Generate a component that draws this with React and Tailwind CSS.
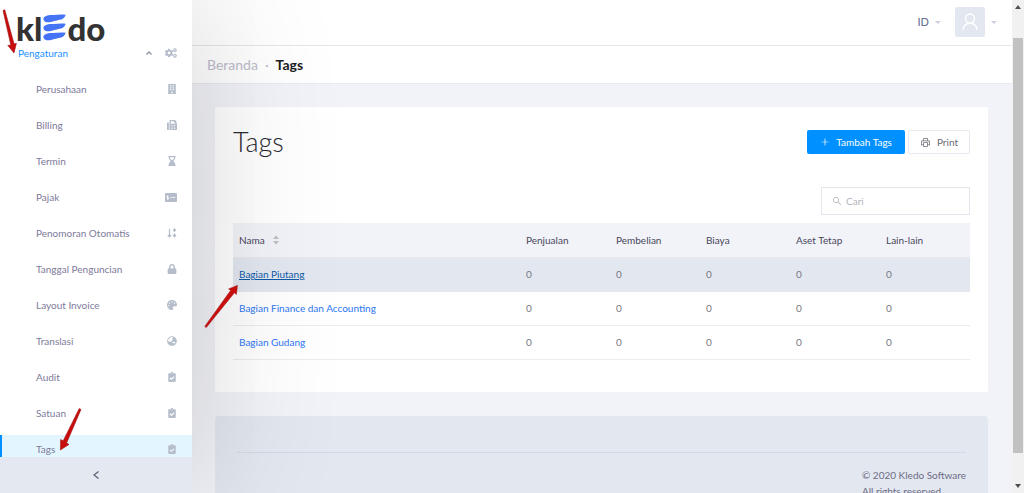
import React from "react";
import {
  FaCogs,
  FaBuilding,
  FaFax,
  FaHourglassEnd,
  FaLock,
  FaPalette,
  FaGlobeAsia,
  FaClipboardCheck,
} from "react-icons/fa";
import { AiOutlinePlus, AiOutlinePrinter, AiOutlineSearch } from "react-icons/ai";

const SortArrows = () => (
  <svg width="10" height="10" viewBox="0 0 12 12" fill="none" stroke="currentColor" strokeWidth="1.5">
    <path d="M3 1V10.4M1 8.4L3 10.6L5 8.4" />
    <path d="M9 1V4.8M9 6.2V10.4M7.2 3.2L9 1.2L10.8 3.2M7.2 8.4L9 10.6L10.800 8.4" />
  </svg>
);

const MoneyCard = () => (
  <svg width="12" height="9" viewBox="0 0 12 9">
    <rect width="12" height="9" rx="0.8" fill="currentColor" />
    <path d="M3.400 3.200H2V4.600H3.400V6H2M2.700 2.400V6.800M5 4.500H6.600M7.400 4.500H10.300" fill="none" stroke="#ffffff" strokeWidth="0.800" />
  </svg>
);

const menuItems = [
  { label: "Perusahaan", icon: FaBuilding },
  { label: "Billing", icon: FaFax },
  { label: "Termin", icon: FaHourglassEnd },
  { label: "Pajak", icon: MoneyCard },
  { label: "Penomoran Otomatis", icon: SortArrows },
  { label: "Tanggal Penguncian", icon: FaLock },
  { label: "Layout Invoice", icon: FaPalette },
  { label: "Translasi", icon: FaGlobeAsia },
  { label: "Audit", icon: FaClipboardCheck },
  { label: "Satuan", icon: FaClipboardCheck },
  { label: "Tags", icon: FaClipboardCheck, active: true },
];

const columns = ["Penjualan", "Pembelian", "Biaya", "Aset Tetap", "Lain-lain"];

const rows = [
  { name: "Bagian Piutang", values: [0, 0, 0, 0, 0], hovered: true },
  { name: "Bagian Finance dan Accounting", values: [0, 0, 0, 0, 0] },
  { name: "Bagian Gudang", values: [0, 0, 0, 0, 0] },
];

const Caret = () => (
  <svg width="6" height="3" viewBox="0 0 6 3" className="fill-[#c9d0dc]">
    <path d="M0 0H6L3 3Z" />
  </svg>
);

const Logo = () => (
  <a href="#" aria-label="kledo" className="flex items-center text-[33px] font-black leading-6 text-[#333333]">
    <span>kl</span>
    <svg width="23" height="27" viewBox="0 0 23 27" className="mx-px fill-[#4573f5]">
      <path d="M.4 4.200C2 1.200 6 .9 10 .9C14 .9 18 .2 22.600 .8C21.600 5 18 5.800 14 6.400C10 7 6.500 8.600 3.600 8.200C1.400 7.800 .2 6.200 .4 4.200Z" />
      <path d="M.4 13.200C2 10.200 6 9.900 10 9.900C14 9.900 18 9.200 22.600 9.800C21.600 14 18 14.800 14 15.400C10 16 6.500 17.600 3.600 17.200C1.400 16.800 .2 15.200 .4 13.200Z" />
      <path d="M.4 22.200C2 19.200 6 18.900 10 18.900C14 18.900 18 18.200 22.600 18.800C21.600 23 18 23.800 14 24.400C10 25 6.500 26.600 3.600 26.200C1.400 25.800 .2 24.200 .4 22.200Z" />
    </svg>
    <span>do</span>
  </a>
);

const Sidebar = () => (
  <aside className="relative z-10 flex w-48 shrink-0 flex-col bg-white shadow-[0_0_150px_rgba(0,0,0,0.19)]">
    <div className="flex h-[39px] shrink-0 items-start pl-4 pt-[14px]">
      <Logo />
    </div>
    <nav className="min-h-0 flex-1 overflow-hidden">
      <a href="#" className="mb-[6px] flex h-[30px] items-center pb-[2px] pl-[18px] pr-[15px] text-[#1890ff]">
        <span className="flex-1">Pengaturan</span>
        <svg width="6" height="4" viewBox="0 0 6 4" className="mr-[13px] fill-none stroke-[#8f94a3]" strokeWidth="1.3">
          <path d="M.5 3.5L3 1L5.5 3.5" />
        </svg>
        <FaCogs size={12} className="text-[#b5bdca]" />
      </a>
      <ul className="space-y-[6px]">
        {menuItems.map(({ label, icon: Icon, active }) => (
          <li key={label}>
            <a
              href="#"
              className={
                active
                  ? "flex h-[30px] items-center justify-between border-l-2 border-[#0090ff] bg-[#e3f6ff] pb-[2px] pl-[34px] pr-[15px] text-[#7d7a99]"
                  : "flex h-[30px] items-center justify-between pb-[2px] pl-9 pr-[15px] text-[#7d7a99]"
              }
            >
              {label}
              <span className="text-[#b5bdca]">
                <Icon size={10} />
              </span>
            </a>
          </li>
        ))}
      </ul>
    </nav>
    <button type="button" aria-label="Collapse" className="flex h-9 shrink-0 items-center justify-center bg-[#e4e8f0]">
      <svg width="6" height="8" viewBox="0 0 6 8" className="fill-none stroke-[#5b5f73]" strokeWidth="1.2">
        <path d="M5.5 .5L1 4L5.5 7.5" />
      </svg>
    </button>
  </aside>
);

const TagsTable = () => (
  <table className="w-full table-fixed text-left">
    <colgroup>
      <col />
      {columns.map((name) => (
        <col key={name} className="w-[90px]" />
      ))}
    </colgroup>
    <thead>
      <tr className="h-[34px] border-b border-[#e8e9ee] bg-[#f2f3f8] text-[#48465b]">
        <th className="px-[6px] font-normal">
          <span className="flex items-center gap-2">
            Nama
            <svg width="6" height="10" viewBox="0 0 6 10" className="fill-[#bfbfbf]">
              <path d="M0 4L3 0.5L6 4Z" />
              <path d="M0 6L3 9.5L6 6Z" />
            </svg>
          </span>
        </th>
        {columns.map((name) => (
          <th key={name} className="px-[6px] font-normal">{name}</th>
        ))}
      </tr>
    </thead>
    <tbody>
      {rows.map((row) => (
        <tr
          key={row.name}
          className={row.hovered ? "h-[34px] border-b border-[#e8e8ec] bg-[#e2e7f0]" : "h-[34px] border-b border-[#ececf0]"}
        >
          <td className="px-[6px]">
            <a href="#" className={row.hovered ? "text-[#0f5aa8] underline" : "text-[#2c77f4]"}>
              {row.name}
            </a>
          </td>
          {row.values.map((value, i) => (
            <td key={i} className="px-[6px] text-[#7a7a80]">{value}</td>
          ))}
        </tr>
      ))}
    </tbody>
  </table>
);

const Scrollbar = () => (
  <div className="flex w-3 shrink-0 flex-col items-center bg-[#f1f1f1] px-px" aria-hidden="true">
    <svg width="6" height="4" viewBox="0 0 6 4" className="my-[5px] fill-[#505050]">
      <path d="M0 4L3 0L6 4Z" />
    </svg>
    <div className="mt-6 w-full flex-1 bg-[#c1c1c1]" />
    <svg width="6" height="4" viewBox="0 0 6 4" className="mb-[5px] mt-[31px] fill-[#505050]">
      <path d="M0 0L3 4L6 0Z" />
    </svg>
  </div>
);

// red pointer arrows laid over the page
const Pointers = () => (
  <svg className="pointer-events-none absolute left-0 top-0 z-20 h-[493px] w-[260px] fill-[#c90c0c] stroke-[#a01515]" strokeWidth="0.6" viewBox="0 0 260 493">
    <path d="M3 10.400L4.800 9.800L14 43.800L16.400 43.400L14 53L7.800 45.400L10.800 45Z" />
    <path d="M81 409.400L79.200 408.600L63.200 440.800L60.600 439.600L60.400 450L69 444.400L66.600 443Z" />
    <path d="M204.800 326.400L206.200 327.600L234.400 292.800L236.400 294.400L237.400 285.400L228.600 289L230.800 290.200Z" />
  </svg>
);

export default function App() {
  return (
    <div className="relative flex h-screen overflow-hidden bg-[#f2f3f8] font-['Lato',sans-serif] text-[10px] leading-4">
      <Sidebar />
      <div className="flex min-w-0 flex-1 flex-col overflow-hidden">
        <header className="flex h-[46px] shrink-0 items-center justify-end border-b border-[#e6e7ee] bg-white pb-px pr-[15px]">
          <button type="button" className="flex items-center gap-[6px] text-[11px] font-medium text-[#6c7293]">
            ID <Caret />
          </button>
          <button type="button" aria-label="Akun" className="ml-[14px] flex items-center gap-[6px]">
            <span className="flex size-[30px] items-center justify-center rounded-xs bg-[#e2e7f0]">
              <svg width="18" height="18" viewBox="0 0 18 18" className="fill-none stroke-white" strokeWidth="1.4">
                <circle cx="9" cy="5.5" r="4.5" />
                <path d="M2 17C2.4 12.8 5 10.2 9 10.2S15.600 12.800 16 17" />
              </svg>
            </span>
            <Caret />
          </button>
        </header>
        <div className="flex h-[38px] shrink-0 items-center border-b border-[#e8e9ef] bg-white pl-[15px] text-sm">
          <a href="#" className="text-[#bcbccb]">Beranda</a>
          <span className="px-[7px] text-[#bcbccb]">·</span>
          <h2 className="font-bold text-[#1c1c24]">Tags</h2>
        </div>
        <main className="pl-[23px] pr-6 pt-[23px]">
          <section className="rounded-xs bg-white px-[18px] pb-8 pt-[23px]">
            <div className="flex items-start justify-between">
              <h1 className="text-[27px] font-light leading-6 text-[#2b2b33]">Tags</h1>
              <div className="flex gap-[3px]">
                <button type="button" className="flex h-6 items-center gap-[6px] rounded-xs bg-[#0090ff] px-[13px] text-white">
                  <AiOutlinePlus size={10} /> Tambah Tags
                </button>
                <button type="button" className="flex h-6 items-center gap-[6px] rounded-xs border border-[#e8e9f0] px-[11px] text-[#6b6b76]">
                  <AiOutlinePrinter size={11} /> Print
                </button>
              </div>
            </div>
            <label className="ml-auto mt-[33px] flex h-7 w-[149px] items-center gap-1 border border-[#e4e6ee] pl-[10px]">
              <AiOutlineSearch size={10} className="shrink-0 text-[#b0b0b8]" />
              <input type="text" placeholder="Cari" aria-label="Cari" className="w-full min-w-0 outline-none placeholder:text-[#b4b4bc]" />
            </label>
            <div className="mt-2">
              <TagsTable />
            </div>
          </section>
          <footer className="mt-6 rounded bg-[#e2e7f0] px-[22px] pb-6 pt-9">
            <div className="flex justify-end border-t border-[#d5d9e3] pt-[14px] text-[#6f6c86]">
              <p>
                © 2020 Kledo Software
                <br />
                All rights reserved
              </p>
            </div>
          </footer>
        </main>
      </div>
      <Scrollbar />
      <Pointers />
    </div>
  );
}
